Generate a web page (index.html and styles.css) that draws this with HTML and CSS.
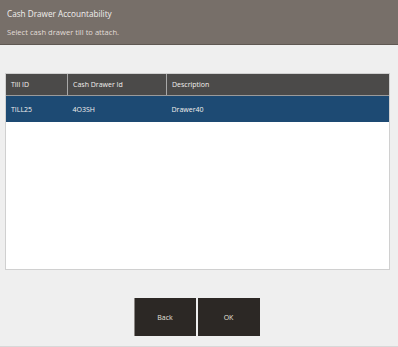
FILE: index.html
```html
<!DOCTYPE html>
<html lang="en">
<head>
    <meta charset="UTF-8">
    <meta name="viewport" content="width=device-width, initial-scale=1.0">
    <title>Cash Drawer Accountability</title>
    <link rel="stylesheet" href="styles.css">
</head>
<body>
    <div class="header">
        <div class="title">Cash Drawer Accountability</div>
        <div class="subtitle">Select cash drawer till to attach.</div>
    </div>

    <div class="panel">
        <table id="till-table">
            <tr>
                <th class="col-till">Till ID</th>
                <th class="col-drawer">Cash Drawer Id</th>
                <th>Description</th>
            </tr>
            <tr class="selected">
                <td>TILL25</td>
                <td>4O3SH</td>
                <td>Drawer40</td>
            </tr>
        </table>
    </div>

    <div class="controls">
        <button class="back">Back</button>
        <button class="ok">OK</button>
    </div>
</body>
</html>
```

FILE: styles.css
```css
:root {
    --header-color: #776f69;
    --table-head-color: #4b4a49;
    --selected-color: #1d4a73;
    --button-color: #2c2825;
    --bg-color: #efefef;
    --text-color: #f2f0ee;
}

body {
    margin: 0;
    height: 347px;
    background-color: var(--bg-color);
    font-family: "Open Sans", Arial, sans-serif;
    display: flex;
    flex-direction: column;
    border-bottom: 1px solid #d8d8d8;
    box-sizing: border-box;
}

.header {
    background-color: var(--header-color);
    color: var(--text-color);
    height: 45px;
    padding: 0 7px;
    box-sizing: border-box;
    border-bottom: 1px solid #5f5852;
}

.title {
    font-size: 8.2px;
    padding-top: 8px;
}

.subtitle {
    font-size: 7.6px;
    padding-top: 8px;
    color: #e2ddd8;
}

.panel {
    margin: 28px 8px 0 5px;
    height: 197px;
    background-color: white;
    border: 1px solid #d0d0d0;
    box-sizing: border-box;
}

table {
    width: 100%;
    border-collapse: collapse;
}

th, td {
    text-align: left;
    font-size: 7px;
    font-weight: normal;
    color: var(--text-color);
    padding: 0 0 0 5px;
}

th {
    background-color: var(--table-head-color);
    height: 21px;
    border-bottom: 1px solid #9a9a9a;
}

th + th {
    border-left: 1px solid #a8a8a8;
}

.col-till {
    width: 56px;
}

.col-drawer {
    width: 93px;
}

.selected td {
    background-color: var(--selected-color);
    height: 26px;
}

.controls {
    display: flex;
    justify-content: center;
    gap: 2px;
    margin-top: 28px;
    padding-right: 5px;
}

button {
    width: 62px;
    height: 38px;
    background-color: var(--button-color);
    color: #e6e2de;
    border: none;
    font-family: "Open Sans", Arial, sans-serif;
    font-size: 7px;
    cursor: pointer;
}

.back {
    border-left: 1px solid #8a8683;
}
```
